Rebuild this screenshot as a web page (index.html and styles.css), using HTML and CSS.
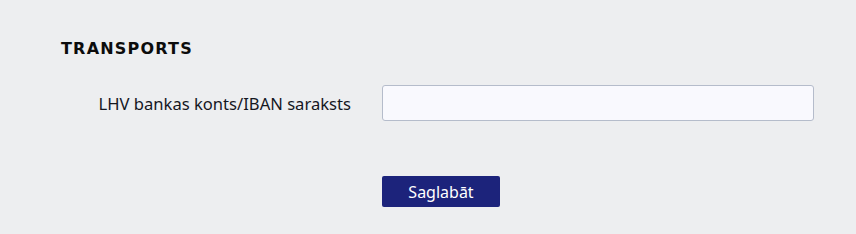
FILE: index.html
```html
<!DOCTYPE html>
<html lang="lv">
<head>
    <meta charset="UTF-8">
    <title>Transports</title>
    <link rel="stylesheet" href="styles.css">
</head>
<body>
    <div class="panel">
        <h2 class="title">TRANSPORTS</h2>
        <div class="row">
            <label class="label" for="iban">LHV bankas konts/IBAN saraksts</label>
            <input class="field" id="iban" type="text">
        </div>
        <div class="row actions">
            <span></span>
            <button class="save">Saglabāt</button>
        </div>
    </div>
</body>
</html>
```

FILE: styles.css
```css
body {
    margin: 0;
    background: #edeef0;
    font-family: "Noto Sans", "Open Sans", sans-serif;
    color: #15171f;
}
.panel {
    padding: 39px 0 0 61px;
}
.title {
    margin: 0 0 27px;
    font-family: "DejaVu Sans", sans-serif;
    font-size: 16px;
    line-height: 19px;
    font-weight: bold;
    letter-spacing: 1.2px;
    color: #0c0c0c;
}
.row {
    display: grid;
    grid-template-columns: 290px 432px;
    column-gap: 31px;
    align-items: center;
}
.label {
    text-align: right;
    font-size: 16.6px;
}
.field {
    box-sizing: border-box;
    height: 36px;
    border: 1px solid #b5bccb;
    border-radius: 3px;
    background: #f9f9fe;
    font: inherit;
    padding: 0 8px;
}
.actions {
    margin-top: 55px;
}
.save {
    width: 118px;
    height: 31px;
    border: none;
    border-radius: 2px;
    background: #1c237b;
    color: #fff;
    font-family: inherit;
    font-size: 16px;
    padding: 0;
    cursor: pointer;
}
```
